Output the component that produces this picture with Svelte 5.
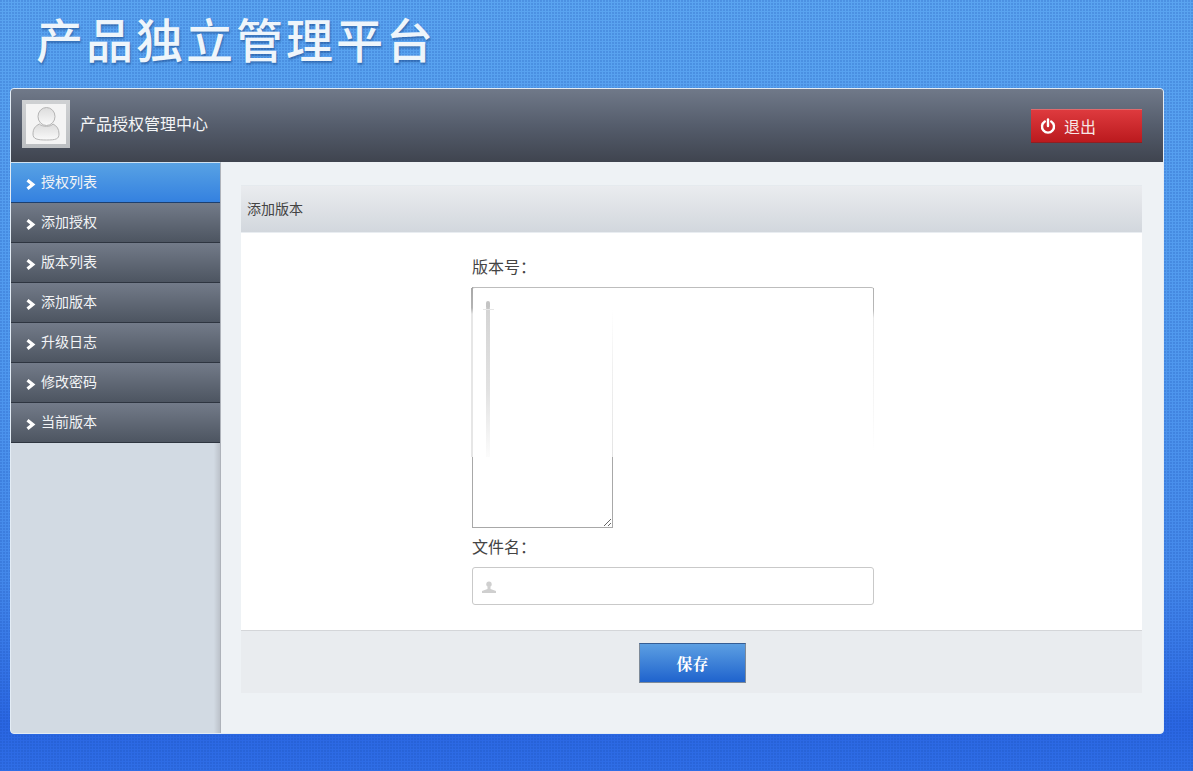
<script>
  const menu = ['授权列表', '添加授权', '版本列表', '添加版本', '升级日志', '修改密码', '当前版本'];
</script>

<div class="page">
  <header class="brand"><h1>产品独立管理平台</h1></header>
  <div class="shell">
    <div class="topbar">
      <div class="avatar">
        <svg viewBox="0 0 40 40" width="40" height="40" aria-hidden="true">
          <defs>
            <linearGradient id="av" x1="0" y1="0" x2="0" y2="1">
              <stop offset="0" stop-color="#dcdcdc" />
              <stop offset="1" stop-color="#fafafa" />
            </linearGradient>
          </defs>
          <rect width="40" height="40" fill="#f4f4f4" />
          <path d="M13.500 20 C9 22 7 25 7 30 C7 35 11 36 20.500 36 C30 36 33 35 33 30 C33 25 31 22 27 20 C25 23 16 23 13.500 20 Z" fill="url(#av)" stroke="#b4b4b4" stroke-width="1" />
          <ellipse cx="20.500" cy="12.500" rx="8.500" ry="9" fill="url(#av)" stroke="#b4b4b4" stroke-width="1" />
        </svg>
      </div>
      <span class="center-name">产品授权管理中心</span>
      <button class="logout" type="button">
        <svg viewBox="0 0 16 16" width="16" height="16" aria-hidden="true">
          <path d="M4.800 3.500 A6 6 0 1 0 11.200 3.500" fill="none" stroke="#fff" stroke-width="2.400" stroke-linecap="round" />
          <path d="M8 1.500 V8" fill="none" stroke="#fff" stroke-width="2.400" stroke-linecap="round" />
        </svg>
        <span>退出</span>
      </button>
    </div>
    <div class="main">
      <nav class="side">
        {#each menu as item, i}
          <a class="item" class:active={i === 0} href="#{i}">
            <svg viewBox="0 0 10 11" width="10" height="11" aria-hidden="true">
              <path d="M1.500 1.300 L6.800 5.500 L1.500 9.700" fill="none" stroke="#fff" stroke-width="3.200" />
            </svg>
            <span>{item}</span>
          </a>
        {/each}
      </nav>
      <section class="content">
        <div class="panel">
          <div class="panel-head">添加版本</div>
          <div class="panel-body">
            <form class="form">
              <label for="ver">版本号：</label>
              <div class="area-wrap">
                <textarea id="ver"></textarea>
                <div class="ghost">
                  <i class="g-left"></i>
                  <i class="g-band"></i>
                  <i class="g-dot"></i>
                  <i class="g-tick"></i>
                  <i class="g-mid"></i>
                  <i class="g-right"></i>
                </div>
              </div>
              <label for="file">文件名：</label>
              <div class="input-wrap">
                <svg viewBox="0 0 14 12" width="14" height="12" aria-hidden="true">
                  <circle cx="7" cy="3.200" r="2.700" fill="#cfcfcf" />
                  <path d="M5.500 5.500 H8.500 V8 L14 10 V12 H0 V10 L5.500 8 Z" fill="#cfcfcf" />
                </svg>
                <input id="file" type="text" />
              </div>
            </form>
          </div>
          <div class="panel-foot"><button class="save" type="button">保存</button></div>
        </div>
      </section>
    </div>
  </div>
</div>

<style>
  :global(body) {
    margin: 0;
    font-family: "Liberation Sans", "Noto Sans CJK SC", sans-serif;
  }
  .page {
    width: 1193px;
    height: 771px;
    box-sizing: border-box;
    overflow: hidden;
    padding: 0 29px 0 10px;
    background-color: #4a94ea;
    background-image:
      conic-gradient(from 270deg at 2px 2px, rgba(20, 70, 170, .2) 25%, transparent 0),
      linear-gradient(180deg, #5aa4f0 0%, #5099ee 45%, #4488ea 75%, #2a66e2 94%, #2f6ee6 100%);
    background-size: 3px 3px, 100% 100%;
  }
  .brand {
    height: 88px;
    box-sizing: border-box;
    padding: 8px 0 0 26px;
  }
  h1 {
    margin: 0;
    font: 500 47px/60px "Noto Sans CJK SC", sans-serif;
    letter-spacing: 3px;
    color: #eef5fb;
    text-shadow: 1px 2px 2px rgba(20, 60, 120, .45);
    white-space: nowrap;
  }
  .shell {
    height: 646px;
    box-sizing: border-box;
    border: 1px solid #e3ecf5;
    border-radius: 4px;
    overflow: hidden;
    display: flex;
    flex-direction: column;
    background: #eef2f5;
  }
  .topbar {
    height: 73px;
    flex: none;
    box-sizing: border-box;
    display: flex;
    align-items: center;
    padding: 0 21px 3px 11px;
    background: linear-gradient(180deg, #707989 0%, #555d6c 50%, #3f444f 100%);
    color: #fff;
  }
  .avatar {
    width: 48px;
    height: 48px;
    box-sizing: border-box;
    padding: 4px;
    background: linear-gradient(180deg, #cfd1d3, #bcbfc2);
    display: flex;
    margin-right: 10px;
  }
  .center-name {
    font-size: 16px;
    flex: 1;
    color: #f4f5f7;
    padding-bottom: 3px;
  }
  .logout {
    width: 111px;
    height: 34px;
    margin-top: 4px;
    display: flex;
    align-items: center;
    gap: 8px;
    padding: 0 0 0 9px;
    border: 0;
    border-top: 1px solid #e06a6d;
    border-bottom: 1px solid #8f1f22;
    background: linear-gradient(180deg, #de3a3e, #bb1a1e);
    color: #f7e6e6;
    font: 16px "Noto Sans CJK SC", sans-serif;
  }
  .main {
    flex: 1;
    display: flex;
    min-height: 0;
  }
  .side {
    width: 209px;
    flex: none;
    border-right: 1px solid #aeb3ba;
    background: linear-gradient(90deg, #d2dae3 0%, #d2dae3 97%, #bcc2ca 100%);
    border-top: 1px solid #cfe2f2;
  }
  .item {
    height: 40px;
    box-sizing: border-box;
    display: flex;
    align-items: center;
    gap: 5px;
    padding: 0 0 0 15px;
    color: #f2f4f6;
    text-decoration: none;
    font-size: 14px;
    background: linear-gradient(180deg, #737b89 0%, #4d5561 100%);
    border-bottom: 1px solid #2e3540;
  }
  .item span {
    padding-bottom: 3px;
  }
  .item svg {
    margin-top: 3px;
  }
  .item.active {
    background: linear-gradient(180deg, #58a2e4 0%, #3481e0 100%);
    border-bottom-color: #1d3f6e;
  }
  .content {
    flex: 1;
    padding: 23px 21px 40px 20px;
    min-width: 0;
  }
  .panel {
    height: 508px;
    display: flex;
    flex-direction: column;
    background: #e9ecef;
  }
  .panel-head {
    height: 48px;
    flex: none;
    box-sizing: border-box;
    padding: 13px 0 0 6px;
    font-size: 14px;
    line-height: 20px;
    color: #444;
    background: linear-gradient(180deg, #eaecef 0%, #d2d7dd 100%);
    border-top: 1px solid #e5eaee;
    border-bottom: 1px solid #e9edf1;
  }
  .panel-body {
    height: 398px;
    flex: none;
    box-sizing: border-box;
    background: #fff;
    border-bottom: 1px solid #d4d6d9;
    padding: 0 0 0 231px;
  }
  .form {
    width: 402px;
    padding-top: 22px;
  }
  label {
    display: block;
    height: 32px;
    font-size: 16px;
    line-height: 26px;
    color: #444;
  }
  .area-wrap {
    position: relative;
    height: 248px;
  }
  textarea {
    display: block;
    width: 141px;
    height: 241px;
    box-sizing: border-box;
    margin: 0;
    padding: 0;
    border: 1px solid #a8a8a8;
    background: #fff;
    outline: 0;
  }
  .ghost {
    position: absolute;
    left: 0;
    top: 0;
    width: 402px;
    height: 170px;
    box-sizing: border-box;
    background: #fff;
    border-top: 1px solid #bdbdbd;
    border-radius: 3px 3px 0 0;
    pointer-events: none;
  }
  .ghost i {
    position: absolute;
  }
  .g-left {
    left: -1px;
    top: 0;
    width: 2px;
    height: 169px;
    background: linear-gradient(180deg, #a8a8a8 0, #b4b4b4 20px, #e6e6e6 26px, #e6e6e6 100%);
  }
  .g-band {
    left: 14px;
    top: 20px;
    width: 4px;
    height: 149px;
    background: linear-gradient(180deg, #d4d4d4 0%, #e2e2e2 55%, #fcfcfc 100%);
  }
  .g-dot {
    left: 14px;
    top: 13px;
    width: 4px;
    height: 8px;
    border-radius: 2px;
    background: #c4c4c4;
  }
  .g-tick {
    left: 11px;
    top: 21px;
    width: 11px;
    height: 1px;
    background: #e6e6e6;
  }
  .g-mid {
    left: 140px;
    top: 22px;
    width: 1px;
    height: 147px;
    background: linear-gradient(180deg, #fff, #f0f0f0 40%, #e4e4e4 100%);
  }
  .g-right {
    right: 0;
    top: 0;
    width: 1px;
    height: 165px;
    background: linear-gradient(180deg, #b0b0b0 0, #b8b8b8 22px, #eaeaea 30px, #f6f6f6 70%, #fff 100%);
  }
  .input-wrap {
    position: relative;
    height: 38px;
  }
  .input-wrap svg {
    position: absolute;
    left: 10px;
    top: 14px;
  }
  input {
    display: block;
    width: 402px;
    height: 38px;
    box-sizing: border-box;
    margin: 0;
    border: 1px solid #c9c9c9;
    border-radius: 3px;
    background: transparent;
    outline: 0;
  }
  .panel-foot {
    flex: 1;
    display: flex;
    justify-content: center;
    padding: 12px 0 0 2px;
    background: #e9ecef;
  }
  .save {
    width: 107px;
    height: 40px;
    border: 1px solid #7d8a99;
    border-top-color: #345d94;
    background: linear-gradient(180deg, #5c9fe2 0%, #1f63cd 100%);
    color: #fff;
    font: 700 16px "Liberation Serif", "Noto Serif CJK SC", "Noto Sans CJK SC", serif;
    padding: 0;
  }
</style>
